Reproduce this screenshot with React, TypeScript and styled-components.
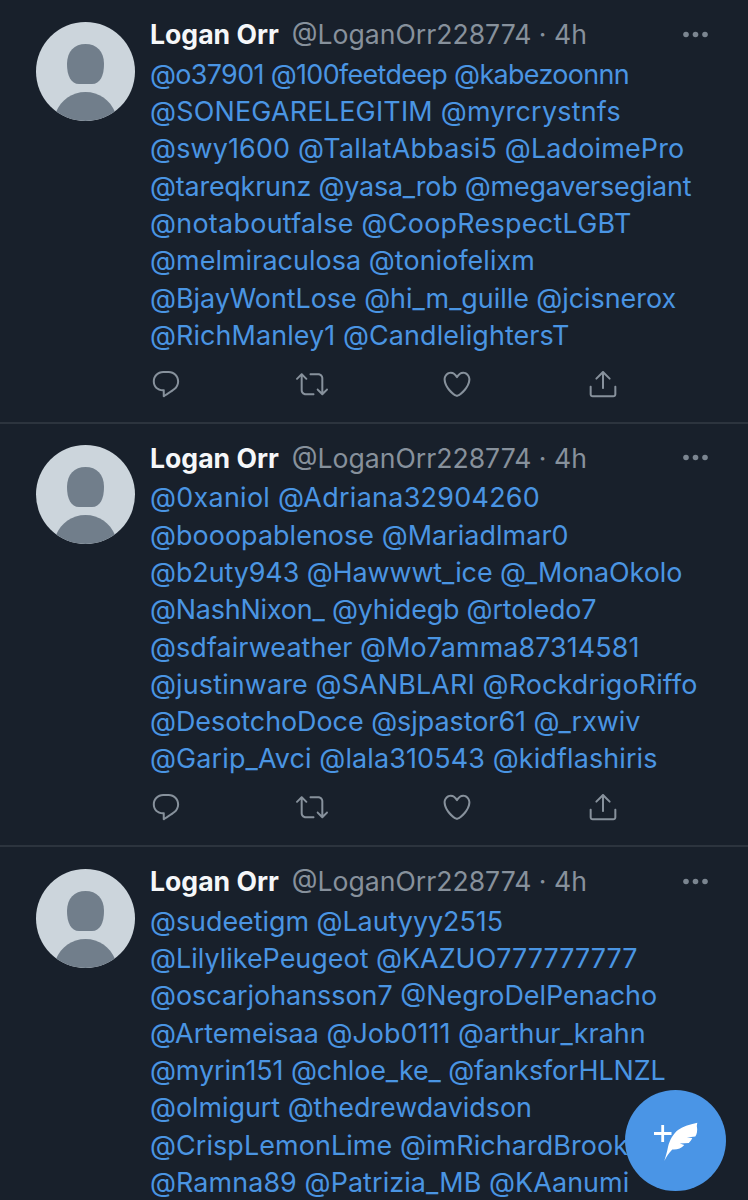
import React from "react";
import styled, { createGlobalStyle } from "styled-components";

const Global = createGlobalStyle`
  html, body { margin: 0; padding: 0; background: #18202b; }
  body { width: 748px; height: 1200px; overflow: hidden; }
`;
const Page = styled.div`
  position: relative; width: 748px; height: 1200px; overflow: hidden;
  background: #18202b; font-family: Inter, "Liberation Sans", sans-serif;
`;
const Tweet = styled.article`
  display: flex; gap: 15px; height: 423.5px; box-sizing: border-box;
  padding: 15.5px 0 0 36px; border-bottom: 2px solid #2c343e;
  &:last-of-type { border-bottom: 0; }
`;
const AvatarBox = styled.svg`
  width: 99px; height: 99px; flex: none; margin-top: 6px; border-radius: 50%;
`;
const Body = styled.div` flex: 1; min-width: 0; `;
const Header = styled.div`
  display: flex; align-items: center; height: 37px; font-size: 26.6px; white-space: nowrap;
`;
const Name = styled.span` font-weight: 700; color: #f5f7f9; margin-right: 13px; `;
const Handle = styled.span` color: #87919c; `;
const More = styled.svg` width: 27px; height: 7px; margin-left: auto; margin-right: 39px; `;
const Mentions = styled.div`
  margin-top: 3.4px; color: #4a95e3; font-size: 26.9px; line-height: 37.3px;
`;
const Line = styled.div<{ $track: number }>`
  white-space: nowrap; letter-spacing: ${(p) => p.$track}px;
`;
const Actions = styled.div`
  display: flex; gap: 113.5px; margin-top: 13.6px; color: #87919c;
`;
const Icon = styled.svg` width: 32px; height: 32px; fill: currentColor; flex: none; `;
const Compose = styled.button`
  position: absolute; left: 625px; top: 1089.5px; width: 101px; height: 101px; padding: 0;
  display: flex; align-items: center; justify-content: center;
  border: 0; border-radius: 50%; background: #4a95e6;
`;
const ComposeIcon = styled.svg` width: 101px; height: 101px; `;

const paths = [
  ["M14.046 2.242l-4.148-.01h-.002c-4.374 0-7.8 3.427-7.8 7.802 0 4.098 3.186 7.206 7.465 7.37v3.828c0 .108.044.286.12.403.142.225.384.347.632.347.138 0 .277-.038.402-.118.264-.168 6.473-4.14 8.088-5.506 1.902-1.61 3.04-3.97 3.043-6.312v-.017c-.006-4.367-3.43-7.787-7.8-7.788zm3.787 12.972c-1.134.96-4.862 3.405-6.772 4.643V16.67c0-.414-.335-.75-.75-.75h-.396c-3.66 0-6.318-2.476-6.318-5.886 0-3.534 2.768-6.302 6.3-6.302l4.147.01h.002c3.532 0 6.3 2.766 6.302 6.296-.003 1.91-.942 3.844-2.514 5.176z"],
  ["M23.77 15.67c-.292-.293-.767-.293-1.06 0l-2.22 2.22V7.65c0-2.068-1.683-3.75-3.75-3.75h-5.85c-.414 0-.75.336-.75.75s.336.75.75.75h5.85c1.24 0 2.25 1.01 2.25 2.25v10.24l-2.22-2.22c-.293-.293-.768-.293-1.06 0s-.294.768 0 1.06l3.5 3.5c.145.147.337.22.53.22s.383-.072.53-.22l3.5-3.5c.294-.292.294-.767 0-1.06zm-10.66 3.28H7.26c-1.24 0-2.25-1.01-2.25-2.25V6.46l2.22 2.22c.148.147.34.22.532.22s.384-.073.53-.22c.293-.293.293-.768 0-1.06l-3.5-3.5c-.293-.294-.768-.294-1.06 0l-3.5 3.5c-.294.292-.294.767 0 1.06s.767.293 1.06 0l2.22-2.22V16.7c0 2.068 1.683 3.75 3.75 3.75h5.85c.414 0 .75-.336.75-.75s-.337-.75-.75-.75z"],
  ["M12 21.638h-.014C9.403 21.59 1.95 14.856 1.95 8.478c0-3.064 2.525-5.754 5.403-5.754 2.29 0 3.83 1.58 4.646 2.73.814-1.148 2.354-2.73 4.645-2.73 2.88 0 5.404 2.69 5.404 5.755 0 6.376-7.454 13.11-10.037 13.157H12zM7.354 4.225c-2.08 0-3.903 1.988-3.903 4.255 0 5.74 7.034 11.596 8.55 11.658 1.518-.062 8.55-5.917 8.55-11.658 0-2.267-1.823-4.255-3.903-4.255-2.528 0-3.94 2.936-3.952 2.965-.23.562-1.156.562-1.387 0-.014-.03-1.425-2.965-3.954-2.965z"],
  ["M17.53 7.47l-5-5c-.293-.293-.768-.293-1.06 0l-5 5c-.294.293-.294.768 0 1.06s.767.294 1.06 0l3.72-3.72V15c0 .414.336.75.75.75s.75-.336.75-.75V4.81l3.72 3.72c.146.147.338.22.53.22s.384-.072.53-.22c.293-.293.293-.767 0-1.06z", "M19.708 21.944H4.292C3.028 21.944 2 20.916 2 19.652V14c0-.414.336-.75.75-.75s.75.336.75.75v5.652c0 .437.355.792.792.792h15.416c.437 0 .792-.355.792-.792V14c0-.414.336-.75.75-.75s.75.336.75.75v5.652c0 1.264-1.028 2.292-2.292 2.292z"],
];

const tweets: [string, number][][] = [
  [["@o37901 @100feetdeep @kabezoonnn", -0.64], ["@SONEGARELEGITIM @myrcrystnfs", 0.23], ["@swy1600 @TallatAbbasi5 @LadoimePro", 0.18], ["@tareqkrunz @yasa_rob @megaversegiant", -0.2], ["@notaboutfalse @CoopRespectLGBT", 0.29], ["@melmiraculosa @toniofelixm", 0.07], ["@BjayWontLose @hi_m_guille @jcisnerox", -0.03], ["@RichManley1 @CandlelightersT", 0.11]],
  [["@0xaniol @Adriana32904260", 0.3], ["@booopablenose @Mariadlmar0", 0.06], ["@b2uty943 @Hawwwt_ice @_MonaOkolo", -0.07], ["@NashNixon_ @yhidegb @rtoledo7", -0.18], ["@sdfairweather @Mo7amma87314581", 0.09], ["@justinware @SANBLARI @RockdrigoRiffo", 0.15], ["@DesotchoDoce @sjpastor61 @_rxwiv", -0.02], ["@Garip_Avci @lala310543 @kidflashiris", 0.14]],
  [["@sudeetigm @Lautyyy2515", -0.03], ["@LilylikePeugeot @KAZUO777777777", 0.02], ["@oscarjohansson7 @NegroDelPenacho", 0], ["@Artemeisaa @Job0111 @arthur_krahn", 0.03], ["@myrin151 @chloe_ke_ @fanksforHLNZL", -0.1], ["@olmigurt @thedrewdavidson", -0.03], ["@CrispLemonLime @imRichardBrook", 0.1], ["@Ramna89 @Patrizia_MB @KAanumi", 0.1]],
];

const Avatar = () => (
  <AvatarBox viewBox="0 0 99 99">
    <rect width="99" height="99" fill="#ccd5dc" />
    <path d="M49.500 22c11 0 18.500 7 18.500 20 0 12-4 20-12 20H43c-8 0-12-8-12-20 0-13 7.500-20 18.500-20z" fill="#717e8b" />
    <path d="M20 90c5-12 16-20 29.500-20S74 78 79 90c-8 6-18 9-29.500 9S28 96 20 90z" fill="#717e8b" />
  </AvatarBox>
);

export default function App() {
  return (
    <Page>
      <Global />
      {tweets.map((lines, i) => (
        <Tweet key={i}>
          <Avatar />
          <Body>
            <Header>
              <Name>Logan Orr</Name>
              <Handle>@LoganOrr228774 · 4h</Handle>
              <More viewBox="0 0 27 7" fill="#7b8590">
                <circle cx="4" cy="3.500" r="2.800" />
                <circle cx="13.500" cy="3.500" r="2.800" />
                <circle cx="23" cy="3.500" r="2.800" />
              </More>
            </Header>
            <Mentions>
              {lines.map(([text, track]) => (
                <Line key={text} $track={track}>{text}</Line>
              ))}
            </Mentions>
            <Actions>
              {paths.map((p, k) => (
                <Icon key={k} viewBox="0 0 24 24">
                  {p.map((d) => (
                    <path key={d} d={d} />
                  ))}
                </Icon>
              ))}
            </Actions>
          </Body>
        </Tweet>
      ))}
      <Compose aria-label="Compose">
        <ComposeIcon viewBox="0 0 101 101">
          <path d="M29 43.500h17.500M37.700 35v17" stroke="#fff" strokeWidth="2.800" fill="none" />
          <path d="M72.300 32.700C64 34.500 57.500 36.500 53 40c-5 4-8.500 10.500-10 17-.8 4.500-2.500 10-3.700 14 2-4 4.500-8 8-11.500 4.500.5 9-1 12-4.500l-4.500-1.500 9-.5c1.500-1.500 2.500-3 3.500-5l-5.500-.5 8.500-1c1.500-2 2.500-6 1.500-10.500z" fill="#fff" />
        </ComposeIcon>
      </Compose>
    </Page>
  );
}
